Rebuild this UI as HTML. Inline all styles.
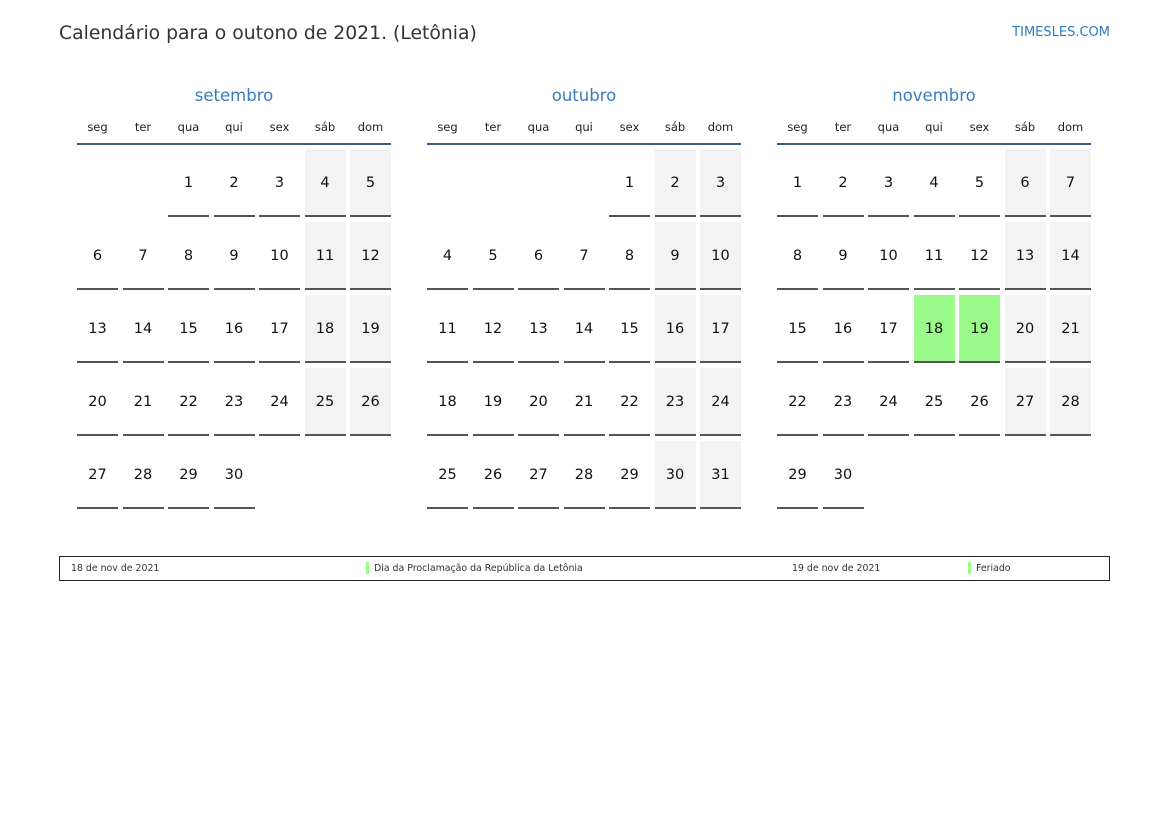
<!DOCTYPE html>
<html><head><meta charset="utf-8"><style>
body{margin:0;width:1169px;height:827px;background:#fff;font-family:"DejaVu Sans","Liberation Sans",sans-serif;position:relative;overflow:hidden}
.t{position:absolute;left:59px;top:23px;font-size:18.8px;color:#333}
.logo{position:absolute;right:59px;top:25px;font-size:13px;color:#2f7bc4}
.m{position:absolute;top:86px;width:314px}
.mn{text-align:center;font-size:16.5px;color:#3a7bbf;height:22px}
.wd{display:grid;grid-template-columns:repeat(7,41px);column-gap:4.5px;font-size:11.5px;color:#222;text-align:center;margin-top:11px;height:18px;line-height:16px}
.bl{height:2px;background:#3d5a80;margin-top:6px}
.g{display:grid;grid-template-columns:repeat(7,41px);column-gap:4.5px;row-gap:5px;margin-top:4px}
.g div{height:65px;padding-top:1px;display:flex;align-items:center;justify-content:center;font-size:14.5px;color:#111}
.g .d{border-bottom:2px solid #555}
.g .w{background:#f3f3f3}
.g .h{background:#9afa8a}
.lg{position:absolute;left:59px;top:556px;width:1049px;height:23px;border:1px solid #222;font-size:9.4px;color:#333}
.lg span{position:absolute;top:6px}
.bar{position:absolute;top:5px;width:3px;height:12px;background:#9afa8a}
</style></head><body>
<div class="t">Calendário para o outono de 2021. (Letônia)</div>
<div class="logo">TIMESLES.COM</div>

<div class="m" style="left:77px"><div class="mn">setembro</div>
<div class="wd"><span>seg</span><span>ter</span><span>qua</span><span>qui</span><span>sex</span><span>sáb</span><span>dom</span></div><div class="bl"></div>
<div class="g">
<div></div><div></div><div class="d">1</div><div class="d">2</div><div class="d">3</div><div class="d w">4</div><div class="d w">5</div>
<div class="d">6</div><div class="d">7</div><div class="d">8</div><div class="d">9</div><div class="d">10</div><div class="d w">11</div><div class="d w">12</div>
<div class="d">13</div><div class="d">14</div><div class="d">15</div><div class="d">16</div><div class="d">17</div><div class="d w">18</div><div class="d w">19</div>
<div class="d">20</div><div class="d">21</div><div class="d">22</div><div class="d">23</div><div class="d">24</div><div class="d w">25</div><div class="d w">26</div>
<div class="d">27</div><div class="d">28</div><div class="d">29</div><div class="d">30</div>
</div></div>

<div class="m" style="left:427px"><div class="mn">outubro</div>
<div class="wd"><span>seg</span><span>ter</span><span>qua</span><span>qui</span><span>sex</span><span>sáb</span><span>dom</span></div><div class="bl"></div>
<div class="g">
<div></div><div></div><div></div><div></div><div class="d">1</div><div class="d w">2</div><div class="d w">3</div>
<div class="d">4</div><div class="d">5</div><div class="d">6</div><div class="d">7</div><div class="d">8</div><div class="d w">9</div><div class="d w">10</div>
<div class="d">11</div><div class="d">12</div><div class="d">13</div><div class="d">14</div><div class="d">15</div><div class="d w">16</div><div class="d w">17</div>
<div class="d">18</div><div class="d">19</div><div class="d">20</div><div class="d">21</div><div class="d">22</div><div class="d w">23</div><div class="d w">24</div>
<div class="d">25</div><div class="d">26</div><div class="d">27</div><div class="d">28</div><div class="d">29</div><div class="d w">30</div><div class="d w">31</div>
</div></div>

<div class="m" style="left:777px"><div class="mn">novembro</div>
<div class="wd"><span>seg</span><span>ter</span><span>qua</span><span>qui</span><span>sex</span><span>sáb</span><span>dom</span></div><div class="bl"></div>
<div class="g">
<div class="d">1</div><div class="d">2</div><div class="d">3</div><div class="d">4</div><div class="d">5</div><div class="d w">6</div><div class="d w">7</div>
<div class="d">8</div><div class="d">9</div><div class="d">10</div><div class="d">11</div><div class="d">12</div><div class="d w">13</div><div class="d w">14</div>
<div class="d">15</div><div class="d">16</div><div class="d">17</div><div class="d h">18</div><div class="d h">19</div><div class="d w">20</div><div class="d w">21</div>
<div class="d">22</div><div class="d">23</div><div class="d">24</div><div class="d">25</div><div class="d">26</div><div class="d w">27</div><div class="d w">28</div>
<div class="d">29</div><div class="d">30</div>
</div></div>

<div class="lg">
<span style="left:11px">18 de nov de 2021</span>
<div class="bar" style="left:306px"></div><span style="left:314px">Dia da Proclamação da República da Letônia</span>
<span style="left:732px">19 de nov de 2021</span>
<div class="bar" style="left:908px"></div><span style="left:916px">Feriado</span>
</div>
</body></html>
